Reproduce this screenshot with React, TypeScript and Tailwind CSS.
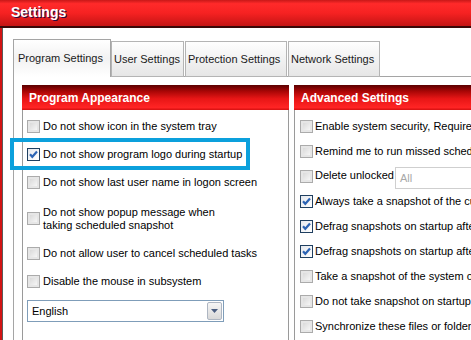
import React from 'react';

function Checkbox({ checked = false }: { checked?: boolean }) {
  if (checked) {
    return (
      <div className="w-[13px] h-[13px] shrink-0 border border-[#1f3f60] bg-gradient-to-br from-[#e4e8ee] to-[#ffffff] flex items-center justify-center">
        <svg width="11" height="11" viewBox="0 0 11 11">
          <path d="M2 5.2 L4.3 7.8 L9 2.6" fill="none" stroke="#2b63b4" strokeWidth="2.2" />
        </svg>
      </div>
    );
  }
  return (
    <div className="w-[13px] h-[13px] shrink-0 border border-[#ababab] bg-[#e6e6e6] p-[2px]">
      <div className="w-full h-full bg-gradient-to-br from-[#dadada] to-[#f6f6f6]" />
    </div>
  );
}

function Row({ label, checked, h = 'h-[28px]', gap = 'gap-[3px]' }: { label: React.ReactNode; checked?: boolean; h?: string; gap?: string }) {
  return (
    <div className={`flex items-center ${gap} ${h}`}>
      <Checkbox checked={checked} />
      <div className="whitespace-nowrap leading-[13px]">{label}</div>
    </div>
  );
}

function GroupHeader({ title }: { title: string }) {
  return (
    <div className="h-[25px] flex items-center pl-[7px] text-white font-bold text-[12px] bg-[linear-gradient(to_bottom,#5a0000_0%,#a80606_25%,#e81616_55%,#ff2424_90%,#d41010_100%)]">
      {title}
    </div>
  );
}

function Tab({ label, selected = false, w, ml }: { label: string; selected?: boolean; w: string; ml: string }) {
  if (selected) {
    return (
      <div className={`${w} ${ml} h-[38px] border border-b-0 border-[#a5a5a5] bg-gradient-to-b from-[#ffffff] via-[#f2f2f2] to-[#ffffff] flex items-center pl-[4px] pb-[1px]`}>
        {label}
      </div>
    );
  }
  return (
    <div className={`${w} ${ml} h-[36px] border border-[#b4b4b4] bg-gradient-to-b from-[#fefefe] to-[#e6e6e6] flex items-center pl-[2px]`}>
      {label}
    </div>
  );
}

export default function App() {
  const advanced: { label: string; checked?: boolean }[] = [
    { label: 'Enable system security, Require administrator password' },
    { label: 'Remind me to run missed scheduled tasks' },
  ];
  const advanced2: { label: string; checked?: boolean }[] = [
    { label: 'Always take a snapshot of the current system', checked: true },
    { label: 'Defrag snapshots on startup after deleting', checked: true },
    { label: 'Defrag snapshots on startup after restoring', checked: true },
    { label: 'Take a snapshot of the system on startup' },
    { label: 'Do not take snapshot on startup if nothing changed' },
    { label: 'Synchronize these files or folders' },
  ];

  return (
    <div className="relative w-[471px] h-[340px] overflow-hidden bg-white flex flex-col font-['Liberation_Sans',Arial,sans-serif] text-[11px] text-black">
      {/* title bar */}
      <div className="h-[28px] shrink-0 border-b-2 border-[#3a0808] bg-[linear-gradient(to_bottom,#c81818_0%,#ff2a2a_14%,#f62222_50%,#c41414_100%)] flex items-center pl-[11px] pb-[2px]">
        <span className="text-white font-bold text-[14px] [text-shadow:1px_1px_0_#2a0a40]">Settings</span>
      </div>

      {/* body */}
      <div className="flex-1 border-l-2 border-[#d21414]">
        <div className="h-full border-l border-[#5a5a5a] pl-[10px] pt-[11px]">
          {/* tabs */}
          <div className="relative z-10 flex items-end -mb-px text-[11px] text-[#1a1a1a]">
            <Tab label="Program Settings" selected w="w-[98px]" ml="ml-0" />
            <Tab label="User Settings" w="w-[73px]" ml="ml-0" />
            <Tab label="Protection Settings" w="w-[102px]" ml="ml-[1px]" />
            <Tab label="Network Settings" w="w-[92px]" ml="ml-[1px]" />
          </div>

          {/* panel */}
          <div className="h-[300px] border-t border-l border-[#a5a5a5] pl-[8px] pt-[8px] flex">
            {/* Program Appearance */}
            <div className="w-[267px] shrink-0 flex flex-col">
              <GroupHeader title="Program Appearance" />
              <div className="flex-1 border-l border-r border-[#9a9a9a] pl-[4px] pt-[2px] flex flex-col">
                <Row label="Do not show icon in the system tray" />
                <Row label="Do not show program logo during startup" checked />
                <Row label="Do not show last user name in logon screen" />
                <Row
                  h="h-[43px] pt-[2px]"
                  label={
                    <>
                      Do not show popup message when
                      <br />
                      taking scheduled snapshot
                    </>
                  }
                />
                <Row label="Do not allow user to cancel scheduled tasks" />
                <Row label="Disable the mouse in subsystem" />
                <div className="mt-[5px] w-[197px] h-[22px] border border-[#7f9db9] bg-white flex items-center justify-between pl-[4px] pr-[1px]">
                  <span>English</span>
                  <div className="w-[15px] h-[18px] rounded-[2px] border border-[#aeb6c2] bg-gradient-to-b from-[#f6f6f6] to-[#d8d8d8] flex items-center justify-center">
                    <svg width="7" height="4" viewBox="0 0 7 4">
                      <path d="M0 0 H7 L3.5 4 Z" fill="#4a5d80" />
                    </svg>
                  </div>
                </div>
              </div>
            </div>

            {/* Advanced Settings */}
            <div className="ml-[5px] w-[320px] shrink-0 flex flex-col">
              <GroupHeader title="Advanced Settings" />
              <div className="flex-1 border-l border-[#9a9a9a] pl-[5px] pt-[4px] flex flex-col">
                {advanced.map((r) => (
                  <Row key={r.label} label={r.label} checked={r.checked} h="h-[25px]" gap="gap-[2px]" />
                ))}
                <div className="flex items-center gap-[2px] h-[25px]">
                  <Checkbox />
                  <span className="whitespace-nowrap -mt-[2px]">Delete unlocked</span>
                  <div className="-ml-[1px] mt-[2px] w-[120px] h-[22px] border border-[#cfcfcf] flex items-center pl-[4px] pt-[1px] text-[#a8a8a8]">
                    All
                  </div>
                </div>
                {advanced2.map((r) => (
                  <Row key={r.label} label={r.label} checked={r.checked} h="h-[25px]" gap="gap-[2px]" />
                ))}
              </div>
            </div>
          </div>
        </div>
      </div>

      {/* highlight annotation */}
      <div className="absolute left-[10px] top-[138px] w-[240px] h-[32px] border-4 border-[#0ca0dc]" />
    </div>
  );
}
